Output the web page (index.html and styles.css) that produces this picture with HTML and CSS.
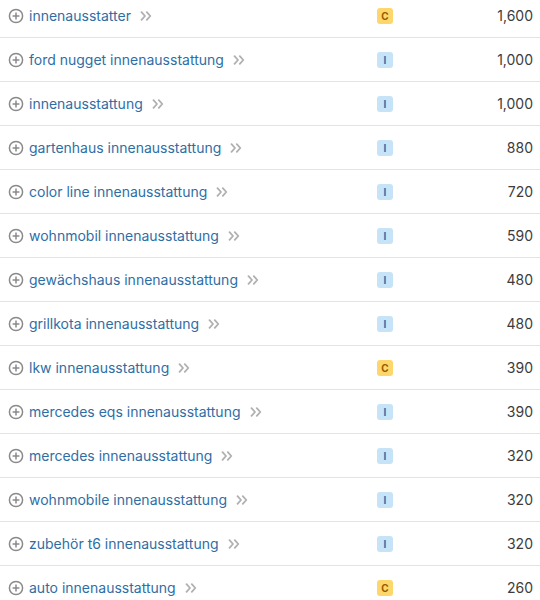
FILE: index.html
```html
<!DOCTYPE html>
<html lang="de">
<head>
<meta charset="utf-8">
<link rel="stylesheet" href="styles.css">
</head>
<body>
<div class="table">
  <div class="row"><div class="kw"><svg class="add" viewBox="0 0 16 16"><circle cx="8" cy="8" r="6.6"/><path d="M8 4.6v6.8M4.6 8h6.8"/></svg><span class="text">innenausstatter</span><svg class="more" viewBox="0 0 12 10"><path d="M1.5 1.2 5 5 1.5 8.8M6.8 1.2 10.3 5 6.8 8.8"/></svg></div><div class="intent"><span class="badge c">C</span></div><div class="vol">1,600</div></div>
  <div class="row"><div class="kw"><svg class="add" viewBox="0 0 16 16"><circle cx="8" cy="8" r="6.6"/><path d="M8 4.6v6.8M4.6 8h6.8"/></svg><span class="text">ford nugget innenausstattung</span><svg class="more" viewBox="0 0 12 10"><path d="M1.5 1.2 5 5 1.5 8.8M6.8 1.2 10.3 5 6.8 8.8"/></svg></div><div class="intent"><span class="badge i">I</span></div><div class="vol">1,000</div></div>
  <div class="row"><div class="kw"><svg class="add" viewBox="0 0 16 16"><circle cx="8" cy="8" r="6.6"/><path d="M8 4.6v6.8M4.6 8h6.8"/></svg><span class="text">innenausstattung</span><svg class="more" viewBox="0 0 12 10"><path d="M1.5 1.2 5 5 1.5 8.8M6.8 1.2 10.3 5 6.8 8.8"/></svg></div><div class="intent"><span class="badge i">I</span></div><div class="vol">1,000</div></div>
  <div class="row"><div class="kw"><svg class="add" viewBox="0 0 16 16"><circle cx="8" cy="8" r="6.6"/><path d="M8 4.6v6.8M4.6 8h6.8"/></svg><span class="text">gartenhaus innenausstattung</span><svg class="more" viewBox="0 0 12 10"><path d="M1.5 1.2 5 5 1.5 8.8M6.8 1.2 10.3 5 6.8 8.8"/></svg></div><div class="intent"><span class="badge i">I</span></div><div class="vol">880</div></div>
  <div class="row"><div class="kw"><svg class="add" viewBox="0 0 16 16"><circle cx="8" cy="8" r="6.6"/><path d="M8 4.6v6.8M4.6 8h6.8"/></svg><span class="text">color line innenausstattung</span><svg class="more" viewBox="0 0 12 10"><path d="M1.5 1.2 5 5 1.5 8.8M6.8 1.2 10.3 5 6.8 8.8"/></svg></div><div class="intent"><span class="badge i">I</span></div><div class="vol">720</div></div>
  <div class="row"><div class="kw"><svg class="add" viewBox="0 0 16 16"><circle cx="8" cy="8" r="6.6"/><path d="M8 4.6v6.8M4.6 8h6.8"/></svg><span class="text">wohnmobil innenausstattung</span><svg class="more" viewBox="0 0 12 10"><path d="M1.5 1.2 5 5 1.5 8.8M6.8 1.2 10.3 5 6.8 8.8"/></svg></div><div class="intent"><span class="badge i">I</span></div><div class="vol">590</div></div>
  <div class="row"><div class="kw"><svg class="add" viewBox="0 0 16 16"><circle cx="8" cy="8" r="6.6"/><path d="M8 4.6v6.8M4.6 8h6.8"/></svg><span class="text">gewächshaus innenausstattung</span><svg class="more" viewBox="0 0 12 10"><path d="M1.5 1.2 5 5 1.5 8.8M6.8 1.2 10.3 5 6.8 8.8"/></svg></div><div class="intent"><span class="badge i">I</span></div><div class="vol">480</div></div>
  <div class="row"><div class="kw"><svg class="add" viewBox="0 0 16 16"><circle cx="8" cy="8" r="6.6"/><path d="M8 4.6v6.8M4.6 8h6.8"/></svg><span class="text">grillkota innenausstattung</span><svg class="more" viewBox="0 0 12 10"><path d="M1.5 1.2 5 5 1.5 8.8M6.8 1.2 10.3 5 6.8 8.8"/></svg></div><div class="intent"><span class="badge i">I</span></div><div class="vol">480</div></div>
  <div class="row"><div class="kw"><svg class="add" viewBox="0 0 16 16"><circle cx="8" cy="8" r="6.6"/><path d="M8 4.6v6.8M4.6 8h6.8"/></svg><span class="text">lkw innenausstattung</span><svg class="more" viewBox="0 0 12 10"><path d="M1.5 1.2 5 5 1.5 8.8M6.8 1.2 10.3 5 6.8 8.8"/></svg></div><div class="intent"><span class="badge c">C</span></div><div class="vol">390</div></div>
  <div class="row"><div class="kw"><svg class="add" viewBox="0 0 16 16"><circle cx="8" cy="8" r="6.6"/><path d="M8 4.6v6.8M4.6 8h6.8"/></svg><span class="text">mercedes eqs innenausstattung</span><svg class="more" viewBox="0 0 12 10"><path d="M1.5 1.2 5 5 1.5 8.8M6.8 1.2 10.3 5 6.8 8.8"/></svg></div><div class="intent"><span class="badge i">I</span></div><div class="vol">390</div></div>
  <div class="row"><div class="kw"><svg class="add" viewBox="0 0 16 16"><circle cx="8" cy="8" r="6.6"/><path d="M8 4.6v6.8M4.6 8h6.8"/></svg><span class="text">mercedes innenausstattung</span><svg class="more" viewBox="0 0 12 10"><path d="M1.5 1.2 5 5 1.5 8.8M6.8 1.2 10.3 5 6.8 8.8"/></svg></div><div class="intent"><span class="badge i">I</span></div><div class="vol">320</div></div>
  <div class="row"><div class="kw"><svg class="add" viewBox="0 0 16 16"><circle cx="8" cy="8" r="6.6"/><path d="M8 4.6v6.8M4.6 8h6.8"/></svg><span class="text">wohnmobile innenausstattung</span><svg class="more" viewBox="0 0 12 10"><path d="M1.5 1.2 5 5 1.5 8.8M6.8 1.2 10.3 5 6.8 8.8"/></svg></div><div class="intent"><span class="badge i">I</span></div><div class="vol">320</div></div>
  <div class="row"><div class="kw"><svg class="add" viewBox="0 0 16 16"><circle cx="8" cy="8" r="6.6"/><path d="M8 4.6v6.8M4.6 8h6.8"/></svg><span class="text">zubehör t6 innenausstattung</span><svg class="more" viewBox="0 0 12 10"><path d="M1.5 1.2 5 5 1.5 8.8M6.8 1.2 10.3 5 6.8 8.8"/></svg></div><div class="intent"><span class="badge i">I</span></div><div class="vol">320</div></div>
  <div class="row"><div class="kw"><svg class="add" viewBox="0 0 16 16"><circle cx="8" cy="8" r="6.6"/><path d="M8 4.6v6.8M4.6 8h6.8"/></svg><span class="text">auto innenausstattung</span><svg class="more" viewBox="0 0 12 10"><path d="M1.5 1.2 5 5 1.5 8.8M6.8 1.2 10.3 5 6.8 8.8"/></svg></div><div class="intent"><span class="badge c">C</span></div><div class="vol">260</div></div>
</div>
</body>
</html>
```
FILE: styles.css
```css
html, body {
  margin: 0;
  padding: 0;
  background: #fff;
  overflow: hidden;
}
body {
  font-family: Inter, "Noto Sans", sans-serif;
  font-size: 14px;
}
.table {
  margin-top: -6px;
}
.row {
  display: grid;
  grid-template-columns: 1fr 60px 120px;
  align-items: center;
  height: 44px;
  box-sizing: border-box;
  border-bottom: 1px solid #e3e3e3;
}
.kw {
  display: flex;
  align-items: center;
  padding-left: 8px;
  min-width: 0;
}
.add {
  width: 16px;
  height: 16px;
  flex: none;
  fill: none;
  stroke: #8a8a8a;
  stroke-width: 1.5;
  margin-right: 5px;
}
.text {
  color: #2f6ea5;
  white-space: nowrap;
}
.more {
  width: 12px;
  height: 10px;
  flex: none;
  margin-left: 9px;
  fill: none;
  stroke: #b0b0b0;
  stroke-width: 1.8;
  stroke-linecap: round;
  stroke-linejoin: round;
}
.intent {
  display: flex;
  justify-content: flex-start;
  padding-left: 17px;
}
.badge {
  display: inline-flex;
  align-items: center;
  justify-content: center;
  width: 16px;
  height: 16px;
  border-radius: 3px;
  font-size: 10px;
  font-weight: 700;
  line-height: 1;
}
.badge.c {
  background: #fdd76c;
  color: #9a5b00;
}
.badge.i {
  background: #c6e3f8;
  color: #2d6fa8;
}
.vol {
  text-align: right;
  padding-right: 7px;
  color: #3c3c3c;
}
```
